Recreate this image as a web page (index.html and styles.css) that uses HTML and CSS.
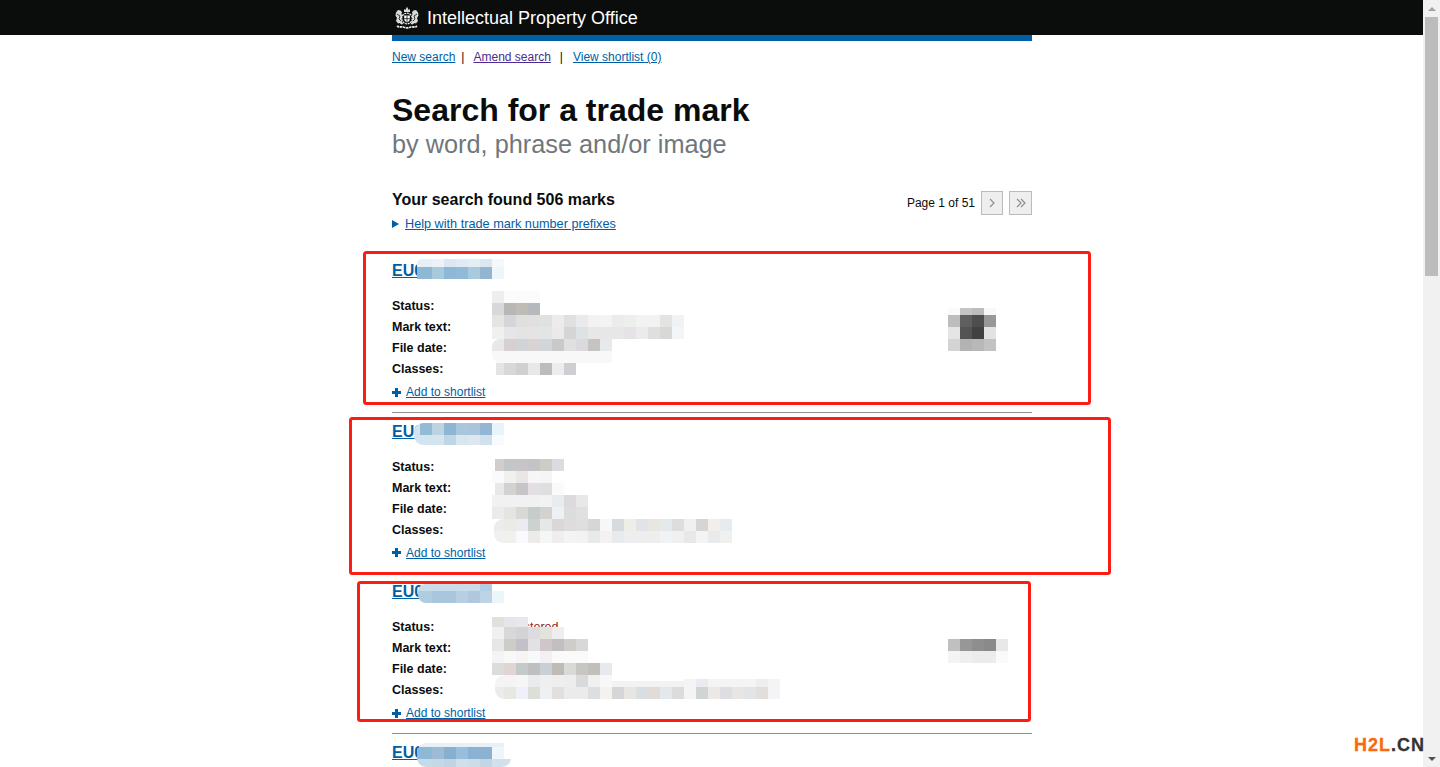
FILE: index.html
```html
<!DOCTYPE html>
<html lang="en">
<head>
<meta charset="utf-8">
<title>Search for a trade mark - Intellectual Property Office</title>
<link rel="stylesheet" href="styles.css">
</head>
<body>
<div class="viewport">
  <header class="topbar">
    <div class="wrap brand">
      <svg class="crest" viewBox="0 0 26 24" width="26" height="24" aria-hidden="true">
        <g fill="#d9d9d9">
          <path d="M2 6.500l2-2.500 2.500.5 1.500 1.500-.5 2 1 2-1 3 .5 3 1.500 2-2 .5-2-1.500-1.500.5L2 15l1-3-1.500-2.500z"/>
          <path d="M24 6.500l-2-2.500-2.500.5-1.500 1.500.5 2-1 2 1 3-.5 3-1.500 2 2 .5 2-1.500 1.500.5L24 15l-1-3 1.500-2.500z"/>
          <path d="M10 6V3l1.300 1L13 .8 14.700 4 16 3v3z"/>
        </g>
        <g fill="none" stroke="#0b0c0c" stroke-width=".8">
          <path d="M3 8l3 2-1 3 2 2M23 8l-3 2 1 3-2 2"/>
        </g>
        <circle cx="13" cy="12.500" r="5.300" fill="#0b0c0c" stroke="#eee" stroke-width="1.200" stroke-dasharray="2 .7"/>
        <path d="M10.200 9.500h5.600v3.500c0 2-1.600 2.800-2.800 3.400-1.200-.6-2.800-1.400-2.800-3.400z" fill="#fff"/>
        <path d="M13 9.500v6.900M10.200 12.700h5.600" stroke="#0b0c0c" stroke-width=".8"/>
        <path d="M3 20c2.500 2 5 .2 7 1.200 2 .9 4 .9 6 0 2-1 4.500.8 7-1.200" fill="none" stroke="#e6e6e6" stroke-width="1.800" stroke-dasharray="2.500 .6"/>
      </svg>
      <span class="brand-name">Intellectual Property Office</span>
    </div>
  </header>
  <main class="wrap">
    <div class="rule-blue"></div>
    <nav class="subnav">
      <a href="#" class="link">New search</a><span class="sep first">|</span>
      <a href="#" class="link visited">Amend search</a><span class="sep">|</span>
      <a href="#" class="link">View shortlist (0)</a>
    </nav>
    <h1 class="title">Search for a trade mark</h1>
    <p class="subtitle">by word, phrase and/or image</p>
    <div class="summary">
      <div>
        <h2 class="found">Your search found 506 marks</h2>
        <p class="help"><span class="tri"></span><a href="#" class="link">Help with trade mark number prefixes</a></p>
      </div>
      <div class="pager">
        <span class="page-label">Page 1 of 51</span>
        <a href="#" class="page-btn next" aria-label="Next"><svg viewBox="0 0 10 12" width="10" height="12"><path d="M3 2l4 4-4 4" fill="none" stroke="#8a8f94" stroke-width="1.200"/></svg></a>
        <a href="#" class="page-btn" aria-label="Last"><svg viewBox="0 0 12 12" width="12" height="12"><path d="M2 2l4 4-4 4M6 2l4 4-4 4" fill="none" stroke="#8a8f94" stroke-width="1.200"/></svg></a>
      </div>
    </div>

    <article class="result">
      <a href="#" class="mark-id">EU0</a>
      <dl class="facts"><dt>Status:</dt><dd></dd><dt>Mark text:</dt><dd></dd><dt>File date:</dt><dd></dd><dt>Classes:</dt><dd></dd></dl>
      <p class="add"><span class="plus"></span><a href="#" class="link">Add to shortlist</a></p>
    </article>
    <article class="result">
      <a href="#" class="mark-id">EU0</a>
      <dl class="facts"><dt>Status:</dt><dd></dd><dt>Mark text:</dt><dd></dd><dt>File date:</dt><dd></dd><dt>Classes:</dt><dd></dd></dl>
      <p class="add"><span class="plus"></span><a href="#" class="link">Add to shortlist</a></p>
    </article>
    <article class="result">
      <a href="#" class="mark-id">EU0</a>
      <dl class="facts"><dt>Status:</dt><dd class="status">Registered</dd><dt>Mark text:</dt><dd></dd><dt>File date:</dt><dd></dd><dt>Classes:</dt><dd></dd></dl>
      <p class="add"><span class="plus"></span><a href="#" class="link">Add to shortlist</a></p>
    </article>
    <article class="result">
      <a href="#" class="mark-id">EU0</a>
    </article>
  </main>

  <svg class="overlay" width="1423" height="767" viewBox="0 0 1423 767" aria-hidden="true">
    <defs>
      <clipPath id="c1t"><rect x="417" y="259" width="107" height="30" rx="5"/></clipPath>
      <clipPath id="c1f"><rect x="492" y="339" width="140" height="24" rx="8"/></clipPath>
      <clipPath id="c2t"><rect x="414" y="423" width="120" height="22" rx="9"/></clipPath>
      <clipPath id="c2c"><rect x="494" y="519" width="258" height="24" rx="9"/></clipPath>
      <clipPath id="c3t"><rect x="418" y="584" width="116" height="19" rx="8"/></clipPath>
      <clipPath id="c3c"><rect x="495" y="675" width="305" height="24" rx="9"/></clipPath>
      <clipPath id="c4t"><rect x="417" y="743" width="94" height="24" rx="9"/></clipPath>
    </defs>

    <g clip-path="url(#c1t)">
      <rect x="417" y="255" width="15" height="12" fill="#e6eff5"/><rect x="432" y="255" width="12" height="12" fill="#ecf2f7"/><rect x="444" y="255" width="12" height="12" fill="#dce8f1"/><rect x="456" y="255" width="12" height="12" fill="#e0ebf3"/><rect x="468" y="255" width="12" height="12" fill="#e4edf4"/><rect x="480" y="255" width="12" height="12" fill="#dce8f0"/><rect x="492" y="255" width="12" height="12" fill="#f4f8fb"/>
      <rect x="417" y="267" width="15" height="12" fill="#8eb8d4"/><rect x="432" y="267" width="12" height="12" fill="#a8c8dc"/><rect x="444" y="267" width="12" height="12" fill="#8db8d6"/><rect x="456" y="267" width="12" height="12" fill="#90bad5"/><rect x="468" y="267" width="12" height="12" fill="#a9c9dd"/><rect x="480" y="267" width="12" height="12" fill="#93b5d2"/><rect x="492" y="267" width="12" height="12" fill="#eef6fa"/>
    </g>
    <rect x="492" y="291" width="12" height="12" fill="#eeeeee"/><rect x="504" y="291" width="36" height="12" fill="#fbfbfb"/>
    <rect x="492" y="303" width="12" height="12" fill="#d8d8d8"/><rect x="504" y="303" width="12" height="12" fill="#b9b7b5"/><rect x="516" y="303" width="12" height="12" fill="#bfbcb8"/><rect x="528" y="303" width="12" height="12" fill="#b5b8bc"/>
    <rect x="492" y="315" width="12" height="12" fill="#e4e4e0"/><rect x="504" y="315" width="12" height="12" fill="#d5d5da"/><rect x="516" y="315" width="12" height="12" fill="#e0dfe0"/><rect x="528" y="315" width="12" height="12" fill="#e1e0df"/><rect x="540" y="315" width="12" height="12" fill="#dfe2e0"/><rect x="552" y="315" width="12" height="12" fill="#ececea"/><rect x="564" y="315" width="12" height="12" fill="#e0e0e0"/><rect x="576" y="315" width="12" height="12" fill="#e8eaee"/><rect x="588" y="315" width="12" height="12" fill="#f2f2f0"/><rect x="600" y="315" width="12" height="12" fill="#f2f3f2"/><rect x="612" y="315" width="12" height="12" fill="#ebecea"/><rect x="624" y="315" width="12" height="12" fill="#edefed"/><rect x="636" y="315" width="24" height="12" fill="#f2f2f2"/><rect x="660" y="315" width="12" height="12" fill="#e5e3e0"/><rect x="672" y="315" width="12" height="12" fill="#eff3f6"/>
    <rect x="492" y="327" width="12" height="12" fill="#f0f0f0"/><rect x="504" y="327" width="12" height="12" fill="#e6e6ea"/><rect x="516" y="327" width="12" height="12" fill="#e4e4e4"/><rect x="528" y="327" width="12" height="12" fill="#e5e3e3"/><rect x="540" y="327" width="12" height="12" fill="#e3e5e5"/><rect x="552" y="327" width="12" height="12" fill="#eceae8"/><rect x="564" y="327" width="12" height="12" fill="#d5d5d5"/><rect x="576" y="327" width="12" height="12" fill="#dde2e5"/><rect x="588" y="327" width="36" height="12" fill="#e8e6e6"/><rect x="624" y="327" width="12" height="12" fill="#e5e3e6"/><rect x="636" y="327" width="12" height="12" fill="#eaecec"/><rect x="648" y="327" width="12" height="12" fill="#dfdfdf"/><rect x="660" y="327" width="12" height="12" fill="#d8d8d6"/><rect x="672" y="327" width="12" height="12" fill="#f3f6f8"/>
    <g clip-path="url(#c1f)">
      <rect x="492" y="339" width="12" height="12" fill="#e8e8e8"/><rect x="504" y="339" width="12" height="12" fill="#d8d0d0"/><rect x="516" y="339" width="12" height="12" fill="#d0d4d6"/><rect x="528" y="339" width="12" height="12" fill="#d8d4d4"/><rect x="540" y="339" width="12" height="12" fill="#d2d6da"/><rect x="552" y="339" width="12" height="12" fill="#c9c9c7"/><rect x="564" y="339" width="12" height="12" fill="#e0e0e0"/><rect x="576" y="339" width="12" height="12" fill="#dadadc"/><rect x="588" y="339" width="12" height="12" fill="#c4c4c2"/><rect x="600" y="339" width="12" height="12" fill="#e6eaea"/>
      <rect x="492" y="351" width="120" height="12" fill="#f8f8f8"/>
    </g>
    <rect x="496" y="363" width="8" height="12" fill="#e4e4e4"/><rect x="504" y="363" width="12" height="12" fill="#d8d8d8"/><rect x="516" y="363" width="12" height="12" fill="#d0d0ce"/><rect x="528" y="363" width="12" height="12" fill="#e8e8e8"/><rect x="540" y="363" width="12" height="12" fill="#bdbbbb"/><rect x="552" y="363" width="12" height="12" fill="#ededed"/><rect x="564" y="363" width="12" height="12" fill="#cfcfd3"/>

    <rect x="948" y="308" width="12" height="7" fill="#fafafa"/><rect x="960" y="308" width="12" height="7" fill="#c4c4c4"/><rect x="972" y="308" width="12" height="7" fill="#bcbcbc"/><rect x="984" y="308" width="12" height="7" fill="#f8f8f8"/>
    <rect x="948" y="315" width="12" height="12" fill="#bdbdbd"/><rect x="960" y="315" width="12" height="12" fill="#5f5f5f"/><rect x="972" y="315" width="12" height="12" fill="#4e4e4e"/><rect x="984" y="315" width="12" height="12" fill="#989898"/>
    <rect x="948" y="327" width="12" height="12" fill="#e5e5e5"/><rect x="960" y="327" width="12" height="12" fill="#545454"/><rect x="972" y="327" width="12" height="12" fill="#414141"/><rect x="984" y="327" width="12" height="12" fill="#e3e3e3"/>
    <rect x="948" y="339" width="12" height="12" fill="#d4d4d4"/><rect x="960" y="339" width="12" height="12" fill="#b3b3b3"/><rect x="972" y="339" width="12" height="12" fill="#b8b8b8"/><rect x="984" y="339" width="12" height="12" fill="#c2c2c2"/>

    <g clip-path="url(#c2t)">
      <rect x="414" y="423" width="6" height="12" fill="#d5e3ee"/><rect x="420" y="423" width="12" height="12" fill="#93bbd6"/><rect x="432" y="423" width="12" height="12" fill="#bcd3e2"/><rect x="444" y="423" width="12" height="12" fill="#8db6d2"/><rect x="456" y="423" width="12" height="12" fill="#a8c6dc"/><rect x="468" y="423" width="12" height="12" fill="#aac4da"/><rect x="480" y="423" width="12" height="12" fill="#93b6d2"/><rect x="492" y="423" width="12" height="12" fill="#e8f3fa"/>
      <rect x="414" y="435" width="30" height="10" fill="#d4e4f0"/><rect x="444" y="435" width="12" height="10" fill="#c0d6e6"/><rect x="456" y="435" width="12" height="10" fill="#d8e6ef"/><rect x="468" y="435" width="12" height="10" fill="#dee7ef"/><rect x="480" y="435" width="12" height="10" fill="#d0e0ec"/><rect x="492" y="435" width="12" height="10" fill="#f8fbfd"/>
    </g>
    <rect x="495" y="459" width="9" height="12" fill="#d0cfcc"/><rect x="504" y="459" width="12" height="12" fill="#c2c8c8"/><rect x="516" y="459" width="12" height="12" fill="#c8c4c8"/><rect x="528" y="459" width="12" height="12" fill="#c4c4c8"/><rect x="540" y="459" width="12" height="12" fill="#cccdc6"/><rect x="552" y="459" width="12" height="12" fill="#dcdbe0"/>
    <rect x="492" y="471" width="12" height="12" fill="#fafafa"/><rect x="504" y="471" width="12" height="12" fill="#f0f0ee"/><rect x="516" y="471" width="12" height="12" fill="#e8e6e6"/><rect x="528" y="471" width="12" height="12" fill="#f6f6f6"/><rect x="540" y="471" width="12" height="12" fill="#f4f5f6"/>
    <rect x="495" y="483" width="9" height="12" fill="#e8e8e8"/><rect x="504" y="483" width="12" height="12" fill="#d2d2d0"/><rect x="516" y="483" width="12" height="12" fill="#c8c5c8"/><rect x="528" y="483" width="12" height="12" fill="#e4dfe2"/><rect x="540" y="483" width="12" height="12" fill="#dedfe0"/><rect x="552" y="483" width="12" height="12" fill="#fafafa"/>
    <rect x="492" y="495" width="48" height="12" fill="#f1f1f1"/><rect x="540" y="495" width="12" height="12" fill="#f2f2f2"/><rect x="552" y="495" width="12" height="12" fill="#e8ecee"/><rect x="564" y="495" width="12" height="12" fill="#dcdadc"/><rect x="576" y="495" width="12" height="12" fill="#e8e8e8"/>
    <rect x="492" y="507" width="12" height="12" fill="#ebebeb"/><rect x="504" y="507" width="12" height="12" fill="#e4e4e2"/><rect x="516" y="507" width="12" height="12" fill="#d8d8d4"/><rect x="528" y="507" width="12" height="12" fill="#c4cccc"/><rect x="540" y="507" width="12" height="12" fill="#d2d2ce"/><rect x="552" y="507" width="12" height="12" fill="#eef0f3"/><rect x="564" y="507" width="12" height="12" fill="#dcdcdc"/><rect x="576" y="507" width="12" height="12" fill="#e0e0e0"/>
    <g clip-path="url(#c2c)">
      <rect x="492" y="519" width="12" height="12" fill="#ececec"/><rect x="504" y="519" width="12" height="12" fill="#ebebe6"/><rect x="516" y="519" width="12" height="12" fill="#ecebf0"/><rect x="528" y="519" width="12" height="12" fill="#cdd2d0"/><rect x="540" y="519" width="12" height="12" fill="#e4e8e6"/><rect x="552" y="519" width="12" height="12" fill="#dad8d6"/><rect x="564" y="519" width="12" height="12" fill="#dfdcdf"/><rect x="576" y="519" width="12" height="12" fill="#dfdfdf"/><rect x="588" y="519" width="12" height="12" fill="#d6d6d8"/><rect x="600" y="519" width="12" height="12" fill="#f6f8f8"/><rect x="612" y="519" width="12" height="12" fill="#d8dbde"/><rect x="624" y="519" width="12" height="12" fill="#efede8"/><rect x="636" y="519" width="12" height="12" fill="#e0e4e6"/><rect x="648" y="519" width="12" height="12" fill="#e8e6e0"/><rect x="660" y="519" width="12" height="12" fill="#e4eaec"/><rect x="672" y="519" width="12" height="12" fill="#dedddb"/><rect x="684" y="519" width="12" height="12" fill="#f0f0f0"/><rect x="696" y="519" width="12" height="12" fill="#d5d5d5"/><rect x="708" y="519" width="12" height="12" fill="#f2eeea"/><rect x="720" y="519" width="12" height="12" fill="#e6ecee"/>
      <rect x="492" y="531" width="12" height="12" fill="#f0f0f0"/><rect x="504" y="531" width="12" height="12" fill="#f0f0ee"/><rect x="516" y="531" width="12" height="12" fill="#fafafc"/><rect x="528" y="531" width="12" height="12" fill="#ebebe9"/><rect x="540" y="531" width="12" height="12" fill="#f5f6f5"/><rect x="552" y="531" width="12" height="12" fill="#efedef"/><rect x="564" y="531" width="12" height="12" fill="#f4f4f4"/><rect x="576" y="531" width="12" height="12" fill="#f2f2f2"/><rect x="588" y="531" width="12" height="12" fill="#e8eaea"/><rect x="600" y="531" width="12" height="12" fill="#f3f2f0"/><rect x="612" y="531" width="12" height="12" fill="#e8eaec"/><rect x="624" y="531" width="36" height="12" fill="#eeeeee"/><rect x="660" y="531" width="12" height="12" fill="#f0f2f4"/><rect x="672" y="531" width="12" height="12" fill="#f0f0f0"/><rect x="684" y="531" width="12" height="12" fill="#e8e8e8"/><rect x="696" y="531" width="12" height="12" fill="#f4f4f4"/><rect x="708" y="531" width="12" height="12" fill="#e8eaec"/><rect x="720" y="531" width="12" height="12" fill="#f0f0ee"/>
    </g>

    <g clip-path="url(#c3t)">
      <rect x="418" y="584" width="62" height="7" fill="#c8dce9"/><rect x="480" y="584" width="12" height="7" fill="#b0cfe6"/>
      <rect x="418" y="591" width="14" height="12" fill="#b0cde0"/><rect x="432" y="591" width="24" height="12" fill="#a8c6dc"/><rect x="456" y="591" width="12" height="12" fill="#b8cfe2"/><rect x="468" y="591" width="12" height="12" fill="#b0c8de"/><rect x="480" y="591" width="12" height="12" fill="#bed4e6"/><rect x="492" y="591" width="12" height="12" fill="#ecf5fa"/>
    </g>
    <rect x="492" y="617" width="12" height="10" fill="#e0e0dc"/><rect x="504" y="617" width="12" height="10" fill="#e4e6ea"/><rect x="516" y="617" width="12" height="10" fill="#e8e8ec"/>
    <rect x="492" y="627" width="12" height="12" fill="#f0f0f0"/><rect x="504" y="627" width="12" height="12" fill="#d8d8d8"/><rect x="516" y="627" width="12" height="12" fill="#d4d2d6"/><rect x="528" y="627" width="12" height="12" fill="#dcdce0"/><rect x="540" y="627" width="12" height="12" fill="#e2e4dc"/><rect x="552" y="627" width="12" height="12" fill="#eeeef0"/>
    <rect x="492" y="639" width="12" height="12" fill="#e6e8e8"/><rect x="504" y="639" width="12" height="12" fill="#cdcdc8"/><rect x="516" y="639" width="12" height="12" fill="#c4c0c8"/><rect x="528" y="639" width="12" height="12" fill="#e2e2e6"/><rect x="540" y="639" width="12" height="12" fill="#cfc6ca"/><rect x="552" y="639" width="12" height="12" fill="#c2bec2"/><rect x="564" y="639" width="12" height="12" fill="#cfcdc9"/><rect x="576" y="639" width="12" height="12" fill="#d8d8d8"/>
    <rect x="492" y="651" width="12" height="12" fill="#f4f4f4"/><rect x="504" y="651" width="12" height="12" fill="#f8f8f8"/><rect x="516" y="651" width="12" height="12" fill="#f6f5f3"/><rect x="528" y="651" width="12" height="12" fill="#f8f9f9"/><rect x="540" y="651" width="12" height="12" fill="#f2f0f2"/><rect x="552" y="651" width="36" height="12" fill="#fafafa"/>
    <rect x="492" y="663" width="12" height="12" fill="#dcdcdc"/><rect x="504" y="663" width="12" height="12" fill="#dfd6d4"/><rect x="516" y="663" width="12" height="12" fill="#c4c9c9"/><rect x="528" y="663" width="12" height="12" fill="#c0bfbf"/><rect x="540" y="663" width="12" height="12" fill="#c8d0d6"/><rect x="552" y="663" width="12" height="12" fill="#bfbcb8"/><rect x="564" y="663" width="12" height="12" fill="#d8dad8"/><rect x="576" y="663" width="12" height="12" fill="#c8c6c4"/><rect x="588" y="663" width="12" height="12" fill="#c0bfbb"/><rect x="600" y="663" width="12" height="12" fill="#e6eaee"/>
    <g clip-path="url(#c3c)">
      <rect x="492" y="675" width="24" height="12" fill="#f4f4f4"/><rect x="516" y="675" width="12" height="12" fill="#f6f6f6"/><rect x="528" y="675" width="12" height="12" fill="#e8ecee"/><rect x="540" y="675" width="12" height="12" fill="#efefef"/><rect x="552" y="675" width="12" height="12" fill="#eeeeee"/><rect x="564" y="675" width="12" height="12" fill="#ededed"/><rect x="576" y="675" width="12" height="12" fill="#d8dadc"/><rect x="588" y="675" width="12" height="12" fill="#f0f0f0"/><rect x="600" y="675" width="12" height="12" fill="#f8f8f8"/>
      <rect x="684" y="679" width="96" height="8" fill="#f4f4f4"/><rect x="696" y="679" width="12" height="8" fill="#e8ecf0"/><rect x="756" y="679" width="12" height="8" fill="#eeeeee"/>
      <rect x="492" y="687" width="12" height="12" fill="#ececec"/><rect x="504" y="687" width="12" height="12" fill="#e8e8e2"/><rect x="516" y="687" width="12" height="12" fill="#f0f0f8"/><rect x="528" y="687" width="12" height="12" fill="#dcdfd8"/><rect x="540" y="687" width="12" height="12" fill="#eef0f3"/><rect x="552" y="687" width="12" height="12" fill="#e2e0dc"/><rect x="564" y="687" width="24" height="12" fill="#ebebeb"/><rect x="588" y="687" width="12" height="12" fill="#dcdee0"/><rect x="600" y="687" width="12" height="12" fill="#f4f2ee"/><rect x="612" y="687" width="12" height="12" fill="#d4d6d8"/><rect x="624" y="687" width="12" height="12" fill="#e8e6e3"/><rect x="636" y="687" width="12" height="12" fill="#dadee0"/><rect x="648" y="687" width="12" height="12" fill="#e2dcd8"/><rect x="660" y="687" width="12" height="12" fill="#e4e8ec"/><rect x="672" y="687" width="12" height="12" fill="#dcdcdc"/><rect x="684" y="687" width="12" height="12" fill="#f4f4f4"/><rect x="696" y="687" width="12" height="12" fill="#d0d4d4"/><rect x="708" y="687" width="12" height="12" fill="#ece8e6"/><rect x="720" y="687" width="12" height="12" fill="#dcdee2"/><rect x="732" y="687" width="12" height="12" fill="#e8e6e2"/><rect x="744" y="687" width="12" height="12" fill="#e2e4e6"/><rect x="756" y="687" width="12" height="12" fill="#e2dedc"/><rect x="768" y="687" width="12" height="12" fill="#f4f4f6"/>
      <rect x="612" y="681" width="72" height="6" fill="#f2f2f2"/>
    </g>

    <rect x="948" y="639" width="12" height="12" fill="#c0c0c0"/><rect x="960" y="639" width="12" height="12" fill="#979797"/><rect x="972" y="639" width="12" height="12" fill="#8e8e8e"/><rect x="984" y="639" width="12" height="12" fill="#8a8a8a"/><rect x="996" y="639" width="12" height="12" fill="#e8e8e8"/>
    <rect x="948" y="651" width="12" height="12" fill="#f4f4f4"/><rect x="960" y="651" width="12" height="12" fill="#efefef"/><rect x="972" y="651" width="24" height="12" fill="#ececec"/><rect x="996" y="651" width="12" height="12" fill="#fafafa"/>

    <g clip-path="url(#c4t)">
      <rect x="417" y="743" width="87" height="4" fill="#e8f0f5"/>
      <rect x="417" y="747" width="15" height="12" fill="#8db8d6"/><rect x="432" y="747" width="12" height="12" fill="#9dbbd4"/><rect x="444" y="747" width="12" height="12" fill="#86afd0"/><rect x="456" y="747" width="12" height="12" fill="#98bedb"/><rect x="468" y="747" width="24" height="12" fill="#8bb2d3"/><rect x="492" y="747" width="12" height="12" fill="#eef6fa"/>
      <rect x="417" y="759" width="15" height="8" fill="#c6dbe8"/><rect x="432" y="759" width="12" height="8" fill="#c4d8e6"/><rect x="444" y="759" width="12" height="8" fill="#c0d4e4"/><rect x="456" y="759" width="12" height="8" fill="#d0e0ea"/><rect x="468" y="759" width="12" height="8" fill="#cbdde9"/><rect x="480" y="759" width="12" height="8" fill="#c2d6e4"/><rect x="492" y="759" width="19" height="8" fill="#d0e0ec"/>
    </g>

    <g fill="none" stroke="#fb1c14" stroke-width="3">
      <rect x="364.500" y="252.500" width="725" height="151" rx="2"/>
      <rect x="350.500" y="418.500" width="759" height="155" rx="2"/>
      <rect x="358.500" y="582.500" width="671" height="138" rx="2"/>
    </g>
  </svg>

  <div class="watermark"><span class="wm-a">H2L</span><span class="wm-b">.CN</span></div>

  <div class="scrollbar" aria-hidden="true">
    <span class="arrow up"></span>
    <span class="thumb"></span>
    <span class="arrow down"></span>
  </div>
</div>
</body>
</html>
```

FILE: styles.css
```css
* { box-sizing: border-box; }
html, body { margin: 0; padding: 0; height: 100%; overflow: hidden; background: #fff; }
body { font-family: "Liberation Sans", Arial, sans-serif; color: #0b0c0c; }

.viewport { position: relative; width: 1440px; height: 767px; overflow: hidden; padding-right: 17px; }
.wrap { width: 640px; margin-left: 392px; }

.topbar { background: #0b0c0c; height: 35px; }
.brand { display: flex; align-items: center; height: 35px; padding-left: 2px; color: #fff; }
.crest { flex: none; }
.brand-name { margin-left: 7px; padding-top: 1px; font-size: 18px; line-height: 35px; }

.rule-blue { height: 6px; background: #005ea5; }
.link { color: #005ea5; text-decoration: underline; }
.link.visited { color: #4c2c92; }

.subnav { display: flex; height: 16px; margin-top: 8px; font-size: 12px; line-height: 16px; }
.sep { margin: 0 10px 0 9px; color: #0b0c0c; }
.sep.first { margin: 0 9px 0 6px; }

.title { margin: 27px 0 0; font-size: 32px; line-height: 36px; font-weight: 700; }
.subtitle { margin: 0; font-size: 25.300px; line-height: 32px; color: #6f777b; }

.summary { display: flex; justify-content: space-between; margin-top: 28px; }
.found { margin: 0; font-size: 16px; line-height: 24px; font-weight: 700; }
.help { display: flex; align-items: center; margin: 4px 0 0; font-size: 12.700px; line-height: 16px; }
.tri { width: 0; height: 0; margin-right: 6px; border-left: 7px solid #005ea5; border-top: 4px solid transparent; border-bottom: 4px solid transparent; }

.pager { display: flex; align-items: flex-start; gap: 6px; padding-top: 3px; }
.page-label { font-size: 12px; line-height: 24px; }
.page-btn { display: flex; align-items: center; justify-content: center; width: 23px; height: 24px; background: #eee; border: 1px solid #bbb; }
.page-btn.next { width: 22px; }

.result { height: 160.670px; padding-top: 8px; border-bottom: 1px solid #8f8f8f; }
.result:last-child { border-bottom: 0; }
.summary + .result { margin-top: 20px; }
.mark-id { display: block; width: max-content; font-size: 16px; line-height: 21px; font-weight: 700; color: #005ea5; text-decoration: underline; }
.facts { display: grid; grid-template-columns: 100px 1fr; grid-auto-rows: 21px; margin: 15px 0 0; font-size: 12.500px; line-height: 21px; }
.facts dt { font-weight: 700; }
.facts dd { margin: 0; }
.facts .status { color: #942514; padding-left: 6px; }
.add { display: flex; align-items: center; margin: 4px 0 0; font-size: 12px; line-height: 16px; }
.plus { position: relative; width: 9px; height: 9px; margin-right: 5px; }
.plus::before, .plus::after { content: ""; position: absolute; background: #005ea5; }
.plus::before { left: 0; top: 3px; width: 9px; height: 3px; }
.plus::after { left: 3px; top: 0; width: 3px; height: 9px; }

.overlay { position: absolute; left: 0; top: 0; pointer-events: none; }

.watermark { position: absolute; left: 1354px; top: 735px; z-index: 2; font-size: 18px; line-height: 20px; font-weight: 700; letter-spacing: 1px; white-space: nowrap; -webkit-text-stroke: .3px; }
.wm-a { color: #f9690e; }
.wm-b { color: #333; }

.scrollbar { position: absolute; right: 0; top: 0; width: 17px; height: 767px; background: #f1f1f1; display: flex; flex-direction: column; align-items: center; }
.thumb { width: 13px; height: 259px; background: #bcbcbc; }
.arrow { width: 0; height: 0; border-left: 4px solid transparent; border-right: 4px solid transparent; }
.arrow.up { margin: 7px 0 6px; border-bottom: 4px solid #a3a3a3; }
.arrow.down { margin-top: auto; margin-bottom: 6px; border-top: 4px solid #505050; }
```
